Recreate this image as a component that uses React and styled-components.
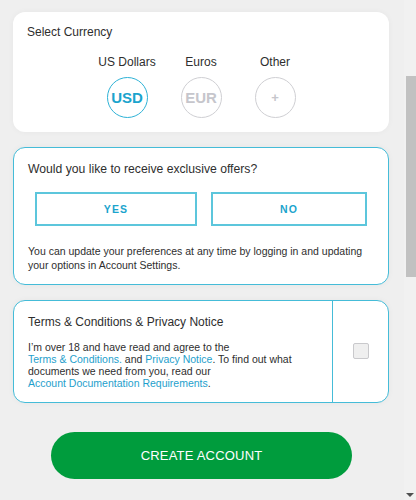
import React, { useState } from "react";
import styled, { createGlobalStyle } from "styled-components";

const Global = createGlobalStyle`
  html, body { margin: 0; padding: 0; background: #efefef; overflow: hidden; }
  body { font-family: "Liberation Sans", Arial, sans-serif; color: #333; }
  * { box-sizing: border-box; }
`;

const Layout = styled.div`
  display: flex;
  width: 416px;
  height: 500px;
  background: #efefef;
`;

const Page = styled.main`
  flex: 1;
  display: flex;
  flex-direction: column;
  padding: 12px 15px 0 13px;
`;

const Card = styled.section`
  background: #fff;
  border-radius: 12px;
  border: ${(p) => (p.$outlined ? "1px solid #45bcd8" : "none")};
  box-shadow: 0 0 6px rgba(0, 0, 0, 0.04);
  margin-bottom: 15px;
`;

const CurrencyCard = styled(Card)`
  padding: 12px 14px 14px 14px;
  height: 120px;
`;

const Title = styled.h2`
  margin: 0;
  font-size: 12px;
  font-weight: normal;
  line-height: 16px;
  color: #2e2e2e;
`;

const Options = styled.div`
  display: flex;
  justify-content: center;
  gap: 14px;
  margin-top: 14px;
`;

const Option = styled.button`
  width: 60px;
  display: flex;
  flex-direction: column;
  align-items: center;
  gap: 7px;
  padding: 0;
  background: none;
  border: none;
  font-family: inherit;
  cursor: pointer;
`;

const OptionLabel = styled.span`
  font-size: 12px;
  line-height: 16px;
  color: #2e2e2e;
  white-space: nowrap;
`;

const Circle = styled.span`
  width: 41px;
  height: 41px;
  border-radius: 50%;
  border: 1px solid ${(p) => (p.$active ? "#2eb2d6" : "#cfcfd3")};
  display: flex;
  align-items: center;
  justify-content: center;
  font-weight: bold;
  font-size: ${(p) => (p.$small ? "13px" : "15px")};
  color: ${(p) => (p.$active ? "#1ba4cd" : "#c6c6cc")};
  background: #fff;
`;

const OffersCard = styled(Card)`
  height: 138px;
  padding: 13px 14px 0 14px;
`;

const OfferTitle = styled.h2`
  margin: 0;
  font-size: 12.2px;
  font-weight: normal;
  line-height: 17px;
  color: #2e2e2e;
`;

const ButtonRow = styled.div`
  display: grid;
  grid-template-columns: 162px 156px;
  gap: 14px;
  margin: 14px 0 0 7px;
`;

const ChoiceButton = styled.button`
  height: 34px;
  background: #fff;
  border: 2px solid #5cc6dc;
  color: #1ba4cd;
  font-family: inherit;
  font-weight: bold;
  font-size: 10.5px;
  letter-spacing: 1.2px;
  cursor: pointer;
`;

const Note = styled.p`
  margin: 18px 0 0 0;
  font-size: 10.5px;
  line-height: 14px;
  color: #2e2e2e;
`;

const TermsCard = styled(Card)`
  display: flex;
  height: 103px;
  margin-bottom: 29px;
`;

const TermsBody = styled.div`
  width: 319px;
  padding: 13px 14px 0 14px;
  border-right: 1px solid #45bcd8;
`;

const TermsText = styled.p`
  margin: 11px 0 0 0;
  font-size: 10.5px;
  line-height: 12px;
  color: #2e2e2e;
`;

const Link = styled.a`
  color: #1ea0cc;
  text-decoration: none;
`;

const CheckCell = styled.div`
  flex: 1;
  display: flex;
  align-items: center;
  justify-content: center;
  padding-bottom: 2px;
`;

const CheckBox = styled.span`
  width: 16px;
  height: 16px;
  border: 1px solid #c9c9cc;
  border-radius: 2px;
  background: ${(p) => (p.$checked ? "#1ba4cd" : "#efefef")};
  cursor: pointer;
`;

const CreateButton = styled.button`
  align-self: center;
  width: 301px;
  height: 47px;
  margin-left: 1px;
  border: none;
  border-radius: 24px;
  background: #009c3d;
  color: #fff;
  font-family: inherit;
  font-size: 13px;
  letter-spacing: 0.2px;
  cursor: pointer;
`;

const ScrollTrack = styled.div`
  width: 12px;
  height: 500px;
  background: #f1f1f1;
  display: flex;
  flex-direction: column;
  align-items: flex-end;
`;

const ScrollThumb = styled.div`
  width: 10px;
  height: 201px;
  margin-top: 76px;
  background: #c1c1c1;
`;

const ScrollArrow = styled.div`
  margin-top: auto;
  margin-bottom: 3px;
  margin-right: 2px;
  width: 0;
  height: 0;
  border-left: 4px solid transparent;
  border-right: 4px solid transparent;
  border-top: 4px solid #505050;
`;

const currencies = [
  { id: "USD", label: "US Dollars", text: "USD" },
  { id: "EUR", label: "Euros", text: "EUR" },
  { id: "OTHER", label: "Other", text: "+" },
];

export default function App() {
  const [currency, setCurrency] = useState("USD");
  const [agree, setAgree] = useState(false);
  return (
    <>
      <Global />
      <Layout>
        <Page>
          <CurrencyCard>
            <Title>Select Currency</Title>
            <Options>
              {currencies.map((c) => (
                <Option key={c.id} onClick={() => setCurrency(c.id)}>
                  <OptionLabel>{c.label}</OptionLabel>
                  <Circle $active={currency === c.id} $small={c.id === "OTHER"}>
                    {c.text}
                  </Circle>
                </Option>
              ))}
            </Options>
          </CurrencyCard>

          <OffersCard $outlined>
            <OfferTitle>Would you like to receive exclusive offers?</OfferTitle>
            <ButtonRow>
              <ChoiceButton>YES</ChoiceButton>
              <ChoiceButton>NO</ChoiceButton>
            </ButtonRow>
            <Note>
              You can update your preferences at any time by logging in and updating
              <br />
              your options in Account Settings.
            </Note>
          </OffersCard>

          <TermsCard $outlined>
            <TermsBody>
              <Title>Terms &amp; Conditions &amp; Privacy Notice</Title>
              <TermsText>
                I’m over 18 and have read and agree to the
                <br />
                <Link href="#">Terms &amp; Conditions.</Link> and{" "}
                <Link href="#">Privacy Notice</Link>. To find out what
                <br />
                documents we need from you, read our
                <br />
                <Link href="#">Account Documentation Requirements</Link>.
              </TermsText>
            </TermsBody>
            <CheckCell>
              <CheckBox $checked={agree} onClick={() => setAgree(!agree)} />
            </CheckCell>
          </TermsCard>

          <CreateButton>CREATE ACCOUNT</CreateButton>
        </Page>
        <ScrollTrack>
          <ScrollThumb />
          <ScrollArrow />
        </ScrollTrack>
      </Layout>
    </>
  );
}
